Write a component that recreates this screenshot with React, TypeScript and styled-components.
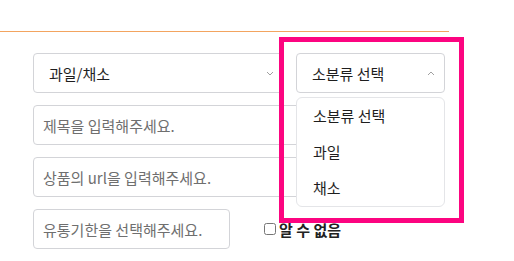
import styled, { createGlobalStyle } from 'styled-components';

const GlobalStyle = createGlobalStyle`
  body {
    margin: 0;
    background: #fff;
    font-family: 'Noto Sans CJK KR', 'Noto Sans', sans-serif;
    font-size: 15px;
    color: #222;
  }
`;

const Page = styled.div`
  position: relative;
  width: 514px;
  height: 261px;
  overflow: hidden;
`;

const Header = styled.div`
  width: 449px;
  height: 32px;
  border-bottom: 1px solid #f3a460;
  box-sizing: border-box;
`;

const Form = styled.div`
  width: 412px;
  margin: 21px 0 0 33px;
  display: flex;
  flex-direction: column;
  gap: 12px;
`;

const Row = styled.div<{ $gap: number }>`
  display: flex;
  align-items: center;
  gap: ${(p) => p.$gap}px;
`;

const SelectBox = styled.div<{ $width?: number }>`
  position: relative;
  flex: ${(p) => (p.$width ? `0 0 ${p.$width}px` : '1')};
  height: 40px;
  box-sizing: border-box;
  border: 1px solid #d3d4d8;
  border-radius: 4px;
  display: flex;
  align-items: center;
  justify-content: space-between;
  padding: 0 9px 0 15px;
  color: #1e1e1e;
`;

const Chevron = styled.svg`
  width: 8px;
  height: 5px;
`;

const Wrap = styled.div`
  position: relative;
  flex: 0 0 149px;
  display: flex;
`;

const Menu = styled.ul`
  position: absolute;
  top: 44px;
  left: 0;
  width: 149px;
  box-sizing: border-box;
  margin: 0;
  padding: 0;
  list-style: none;
  background: #fff;
  border: 1px solid #e4e5e8;
  border-radius: 6px;
  z-index: 2;
`;

const MenuItem = styled.li`
  height: 36px;
  line-height: 36px;
  padding-left: 16px;
  color: #1e1e1e;
`;

const Input = styled.input<{ $width?: number }>`
  width: ${(p) => (p.$width ? `${p.$width}px` : '100%')};
  height: 40px;
  box-sizing: border-box;
  border: 1px solid #d3d4d8;
  border-radius: 4px;
  padding: 0 9px;
  font: inherit;
  color: #222;
  outline: none;
  &::placeholder {
    color: #6f6f6f;
  }
`;

const CheckLabel = styled.label`
  display: flex;
  align-items: center;
  gap: 3px;
  font-weight: 700;
  color: #222;
`;

const Check = styled.input`
  width: 12px;
  height: 12px;
  margin: 0;
`;

const Highlight = styled.div`
  position: absolute;
  left: 279px;
  top: 37px;
  width: 185px;
  height: 186px;
  box-sizing: border-box;
  border: 5px solid #fc0480;
  pointer-events: none;
  z-index: 3;
`;

const Down = () => (
  <Chevron viewBox="0 0 8 5">
    <path d="M1 1l3 3 3-3" fill="none" stroke="#a0a0a0" strokeWidth="1" />
  </Chevron>
);

const Up = () => (
  <Chevron viewBox="0 0 8 5">
    <path d="M1 4l3-3 3 3" fill="none" stroke="#a0a0a0" strokeWidth="1" />
  </Chevron>
);

const App = () => {
  const subOptions = ['소분류 선택', '과일', '채소'];

  return (
    <Page>
      <GlobalStyle />
      <Header />
      <Form>
        <Row $gap={12}>
          <SelectBox>
            <span>과일/채소</span>
            <Down />
          </SelectBox>
          <Wrap>
            <SelectBox $width={149}>
              <span>소분류 선택</span>
              <Up />
            </SelectBox>
            <Menu>
              {subOptions.map((o) => (
                <MenuItem key={o}>{o}</MenuItem>
              ))}
            </Menu>
          </Wrap>
        </Row>
        <Input placeholder="제목을 입력해주세요." />
        <Input placeholder="상품의 url을 입력해주세요." />
        <Row $gap={34}>
          <Input $width={197} placeholder="유통기한을 선택해주세요." />
          <CheckLabel>
            <Check type="checkbox" />
            알 수 없음
          </CheckLabel>
        </Row>
      </Form>
      <Highlight />
    </Page>
  );
};

export default App;
